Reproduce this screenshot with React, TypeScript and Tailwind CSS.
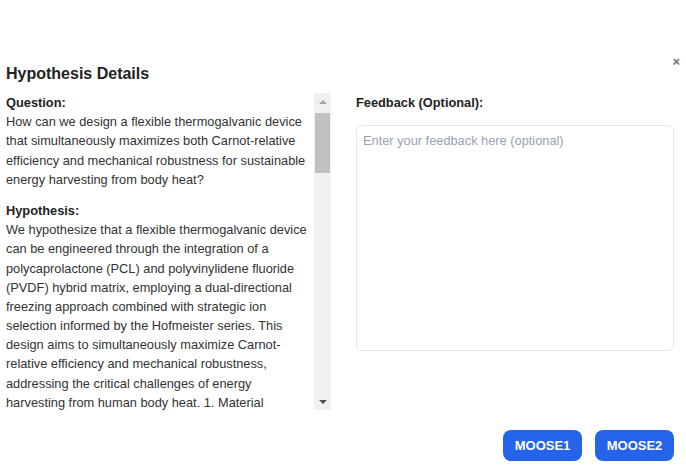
import { useState } from "react";

const question =
  "How can we design a flexible thermogalvanic device that simultaneously maximizes both Carnot-relative efficiency and mechanical robustness for sustainable energy harvesting from body heat?";

const hypothesis =
  "We hypothesize that a flexible thermogalvanic device can be engineered through the integration of a polycaprolactone (PCL) and polyvinylidene fluoride (PVDF) hybrid matrix, employing a dual-directional freezing approach combined with strategic ion selection informed by the Hofmeister series. This design aims to simultaneously maximize Carnot-relative efficiency and mechanical robustness, addressing the critical challenges of energy harvesting from human body heat. 1. Material Selection: The PCL provides flexibility while PVDF contributes mechanical strength and chemical stability. 2. Fabrication: Dual-directional freezing creates aligned lamellar pores that enhance ion transport. 3. Ion Selection: Hofmeister-guided salting-out strengthens the polymer network.";

// headless chrome hides native scrollbars, so draw the classic one
function ScrollBar() {
  return (
    <div className="w-[17px] h-full bg-[#f1f1f1] flex flex-col">
      <div className="h-[17px] flex items-center justify-center">
        <div className="w-0 h-0 border-x-[4px] border-x-transparent border-b-[4px] border-b-[#a3a3a3]" />
      </div>
      <div className="mt-[3px] mx-[1px] h-[60px] bg-[#c1c1c1]" />
      <div className="flex-1" />
      <div className="h-[17px] flex items-center justify-center">
        <div className="w-0 h-0 border-x-[4px] border-x-transparent border-t-[4px] border-t-[#505050]" />
      </div>
    </div>
  );
}

export default function App() {
  const [feedback, setFeedback] = useState("");

  return (
    <div className="relative w-[686px] h-[468px] bg-white font-['Liberation_Sans',Arial,sans-serif] text-[#333]">
      <button className="absolute right-[6px] top-[54px] text-[13px] leading-4 text-gray-500 font-bold">
        ×
      </button>

      <h2 className="pt-[62px] pl-[6px] text-base leading-6 font-bold text-[#222]">
        Hypothesis Details
      </h2>

      <div className="mt-[7px] flex pl-[6px] pr-[12px]">
        <div className="w-[325px] h-[317px] flex">
          <div className="flex-1 overflow-y-auto pr-[4px] text-[12.8px] leading-[1.5]">
            <div className="mb-3">
              <div className="font-bold text-[#222]">Question:</div>
              <p>{question}</p>
            </div>
            <div className="mb-3">
              <div className="font-bold text-[#222]">Hypothesis:</div>
              <p>{hypothesis}</p>
            </div>
          </div>
          <ScrollBar />
        </div>

        <div className="ml-[25px] flex-1">
          <label className="block text-[12.8px] leading-[1.5] font-bold text-[#222] mb-[13px]">
            Feedback (Optional):
          </label>
          <textarea
            value={feedback}
            onChange={(e) => setFeedback(e.target.value)}
            placeholder="Enter your feedback here (optional)"
            className="block w-full h-[226px] resize-none border border-gray-200 rounded-md px-[6px] py-[5px] text-[12.8px] leading-5 placeholder:text-gray-400 focus:outline-none"
          />
        </div>
      </div>

      <div className="mt-[20px] flex justify-end gap-[13px] pr-[12px]">
        <button className="h-[31px] w-[79px] rounded-lg bg-[#2563eb] text-white text-[13px] font-bold">
          MOOSE1
        </button>
        <button className="h-[31px] w-[79px] rounded-lg bg-[#2563eb] text-white text-[13px] font-bold">
          MOOSE2
        </button>
      </div>
    </div>
  );
}
